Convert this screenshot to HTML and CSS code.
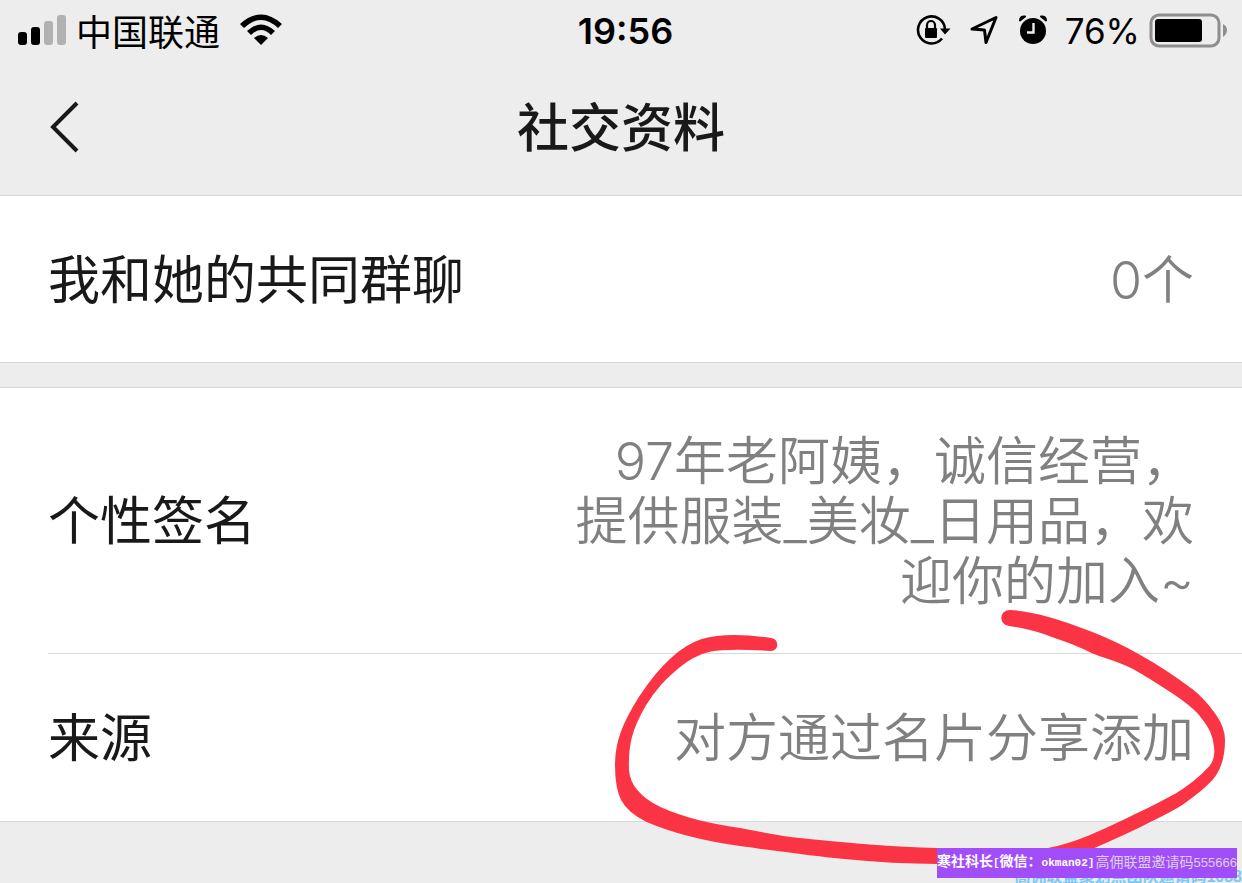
FILE: index.html
```html
<!DOCTYPE html>
<html lang="zh-CN">
<head>
    <meta charset="UTF-8">
    <meta name="viewport" content="width=device-width, initial-scale=1.0">
    <title>社交资料</title>

    <link rel="stylesheet" href="styles.css">
</head>
<body>
    <!-- Status Bar -->
    <div class="status-bar">
        <div class="status-left">
            <svg class="signal" width="50" height="32" viewBox="0 0 50 32">
                <rect x="1" y="18" width="9" height="13" rx="3"/>
                <rect x="14" y="13" width="9" height="18" rx="3"/>
                <rect x="27" y="7" width="9" height="24" rx="3" fill="#b1b1b1"/>
                <rect x="40" y="1" width="9" height="30" rx="3" fill="#b1b1b1"/>
            </svg>
            <span class="carrier">中国联通</span>
            <svg class="wifi" width="42" height="32" viewBox="0 0 42 32">
                <path d="M0 10Q21-9 42 10L38 14Q21-2 4 14Z"/>
                <path d="M7 17Q21 4 35 17L31 21Q21 11 11 21Z"/>
                <path d="M14 24Q21 18 28 24L21 31Z"/>
            </svg>
        </div>
        <div class="clock">19:56</div>
        <div class="status-right">
            <svg width="36" height="32" viewBox="0 0 36 32">
                <path d="M27 24.500A13.500 13.500 0 1 1 30 15" fill="none" stroke="#000" stroke-width="2.600"/>
                <path d="M25 14.500H35.500L30 20.500Z"/>
                <rect x="10" y="14" width="12" height="10" rx="1"/>
                <path d="M12 15V11a4 4 0 0 1 8 0V15" fill="none" stroke="#000" stroke-width="2.200"/>
            </svg>
            <svg width="30" height="32" viewBox="0 0 30 32">
                <path d="M3 15L27 3.500L17 28.500L15.500 16Z" fill="none" stroke="#000" stroke-width="3" stroke-linejoin="round"/>
            </svg>
            <svg width="30" height="32" viewBox="0 0 30 32">
                <circle cx="16" cy="17" r="13"/>
                <path d="M3 6.500Q3 2 8 2.500ZM29 6.500Q29 2 24 2.500Z" stroke="#000" stroke-width="2" stroke-linejoin="round"/>
                <path d="M16.500 9V18.500H10" fill="none" stroke="#ededed" stroke-width="2.400"/>
            </svg>
            <span class="percent">76%</span>
            <svg class="battery" width="80" height="36" viewBox="0 0 80 36">
                <rect x="3" y="3" width="68" height="31" rx="8" fill="none" stroke="#8e8e8e" stroke-width="3"/>
                <rect x="7" y="7" width="47" height="23" rx="3"/>
                <path d="M75 12Q79 14 79 18Q79 22 75 25Z" fill="#8e8e8e"/>
            </svg>
        </div>
    </div>

    <!-- Header -->
    <header class="header">
        <a class="back" href="#" aria-label="返回">
            <svg width="32" height="56" viewBox="0 0 32 56">
                <path d="M29 2L5 26L29 50" fill="none" stroke="#191919" stroke-width="4"/>
            </svg>
        </a>
        <h1>社交资料</h1>
    </header>

    <main class="content">
        <section class="group">
            <div class="row">
                <span class="label">我和她的共同群聊</span>
                <span class="value">0个</span>
            </div>
        </section>

        <section class="group">
            <div class="row">
                <span class="label">个性签名</span>
                <span class="value">97年老阿姨，诚信经营，<br>提供服装_美妆_日用品，欢<br>迎你的加入~</span>
            </div>
            <div class="row">
                <span class="label">来源</span>
                <span class="value">对方通过名片分享添加</span>
            </div>
        </section>

        <!-- Red marker circle -->
        <svg class="marker" width="642" height="283" viewBox="600 600 642 283">
            <path d="M771 639C745 635 722 634 702 640C680 647 660 667 640 697C623 724 616 742 616 765C616 795 622 809 647 821C675 833 705 840 740 845C800 853 865 863 937 863C1010 865 1065 861 1092 848C1110 840 1126 833 1142 825C1156 818 1170 812 1182 804C1194 795 1199 792 1207 784C1219 774 1224 758 1224 740C1224 730 1220 722 1215 715C1208 705 1201 697 1192 690C1176 678 1160 667 1142 657C1126 648 1110 640 1092 633C1062 621 1035 612 1010 611C1000 611 1000 624 1009 625C1025 627 1040 631 1055 637C1067 641 1080 646 1092 652C1106 658 1121 661 1135 669C1148 676 1160 684 1172 692C1184 700 1194 707 1201 716C1210 727 1214 735 1215 747C1216 755 1215 761 1210 767C1200 778 1187 788 1175 795C1164 801 1153 807 1142 812C1110 827 1080 843 1048 849C1010 851 980 850 937 849C890 848 850 844 800 839C780 837 760 833 740 829C710 825 680 817 660 808C640 798 629 785 628 770C627 745 631 729 645 705C656 687 665 679 675 670C700 649 713 646 771 650C778 650 778 640 771 639Z"/>
        </svg>
    </main>

    <!-- Watermarks -->
    <div class="watermark">高佣联盟聚划点团队邀请码1088</div>
    <div class="badge"><strong>寒社科长<span class="mono">[</span>微信：<span class="mono">okman02]</span></strong><span class="code">高佣联盟邀请码<span class="digits">555666</span></span></div>
</body>
</html>
```
FILE: styles.css
```css
/* ======= General Styling ======= */
* {
    box-sizing: border-box;
}

body {
    font-family: Inter, "Noto Sans CJK SC", sans-serif;
    margin: 0;
    min-height: 100vh;
    position: relative;
    overflow: hidden;
    background: #ededed;
    color: #191919;
}

svg {
    display: block;
    flex-shrink: 0;
}

/* ======= Status Bar ======= */
.status-bar {
    display: grid;
    grid-template-columns: 1fr auto 1fr;
    align-items: center;
    height: 60px;
    padding: 0 14px 0 17px;
    color: #000;
    font-size: 36px;
}

.status-left,
.status-right {
    display: flex;
    align-items: center;
}

.carrier {
    margin: 0 20px 0 9px;
}

.clock {
    padding: 2px 0 0 6px;
    font-weight: 600;
}

.status-right {
    justify-content: flex-end;
    gap: 18px;
}

.percent {
    padding-top: 2px;
    font-size: 35px;
}

.battery {
    margin-left: -10px;
}

/* ======= Header ======= */
.header {
    display: grid;
    grid-template-columns: 1fr auto 1fr;
    align-items: center;
    height: 136px;
    padding: 2px 48px 0;
    border-bottom: 1px solid #d8d8d8;
}

.header h1 {
    margin: 0;
    font-size: 52px;
    font-weight: 500;
    line-height: 60px;
}

.back {
    justify-self: start;
}

/* ======= Rows ======= */
.content {
    position: relative;
}

.group {
    background: #fff;
    border-bottom: 1px solid #d8d8d8;
}

.group + .group {
    margin-top: 24px;
    border-top: 1px solid #d8d8d8;
}

.row {
    display: flex;
    align-items: center;
    justify-content: space-between;
    margin-left: 48px;
    padding: 44px 48px 41px 0;
    min-height: 166px;
    font-size: 52px;
    line-height: 60px;
}

.row + .row {
    min-height: 168px;
    border-top: 1px solid #d8d8d8;
}

.value {
    color: #808080;
    font-weight: 350;
    text-align: right;
}

/* ======= Overlays ======= */
.marker {
    position: absolute;
    right: 0;
    top: 404px;
    fill: #fb3445;
    stroke: #fb3445;
    stroke-width: 2px;
    stroke-linejoin: round;
}

.watermark {
    position: absolute;
    right: 0;
    bottom: -6px;
    color: #7cc8f4;
    font-family: "Liberation Sans", "Noto Sans CJK SC", sans-serif;
    font-size: 16px;
    font-weight: 700;
    line-height: 24px;
}

.badge {
    position: absolute;
    right: 5px;
    bottom: 5px;
    display: flex;
    justify-content: space-between;
    width: 300px;
    height: 30px;
    background: #a24dfa;
    color: #fff;
    font-size: 14px;
    line-height: 26px;
    white-space: nowrap;
}

.mono {
    font-family: "Liberation Mono", monospace;
    font-size: 11px;
}

.code {
    color: #ddd0ee;
    line-height: 28px;
}

.digits {
    font-family: "Liberation Sans", sans-serif;
    font-size: 13px;
}
```
